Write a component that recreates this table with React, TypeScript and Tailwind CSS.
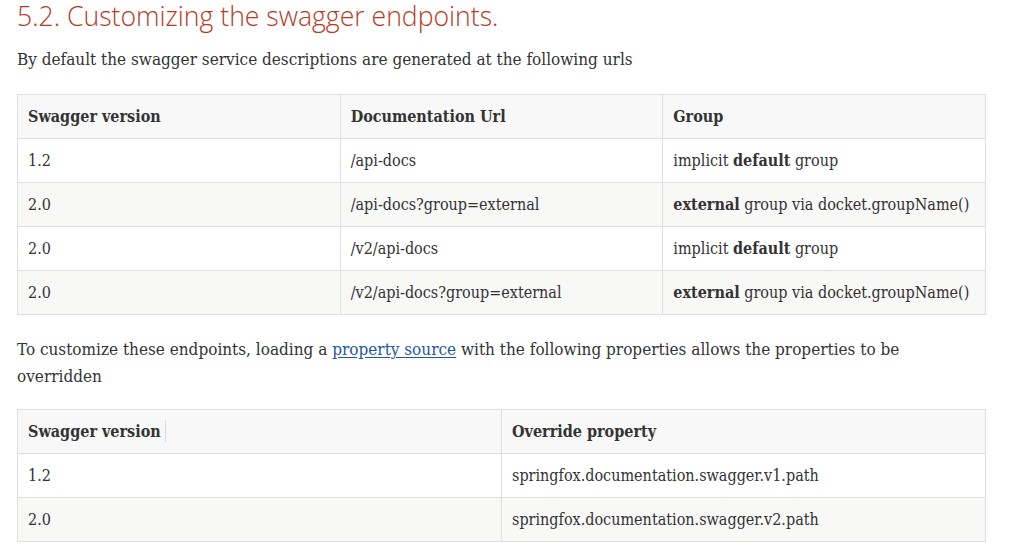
const serif = "font-['DejaVu_Serif_Condensed','DejaVu_Serif',serif]";

const endpoints = [
  { version: "1.2", url: "/api-docs", group: <>implicit <b>default</b> group</> },
  { version: "2.0", url: "/api-docs?group=external", group: <><b>external</b> group via docket.groupName()</> },
  { version: "2.0", url: "/v2/api-docs", group: <>implicit <b>default</b> group</> },
  { version: "2.0", url: "/v2/api-docs?group=external", group: <><b>external</b> group via docket.groupName()</> },
];

const overrides = [
  { version: "1.2", prop: "springfox.documentation.swagger.v1.path" },
  { version: "2.0", prop: "springfox.documentation.swagger.v2.path" },
];

const th = "border border-[#dedede] px-[10px] h-[44px] text-left font-bold text-[#333333] align-middle";
const td = "border border-[#dedede] px-[10px] h-[44px] text-left font-normal text-[#333333] align-middle";

export default function App() {
  return (
    <div className={`bg-white w-[1017px] h-[555px] overflow-hidden px-[17px] ${serif}`}>
      <div className="w-[969px]">
        <h3 className="font-['Open_Sans',sans-serif] font-light text-[26.6px] leading-[33px] text-[#ba3925] mb-[13px]">
          5.2. Customizing the swagger endpoints.
        </h3>
        <p className="text-[17px] leading-[27.2px] text-[#333333] mb-[21px]">
          By default the swagger service descriptions are generated at the following urls
        </p>

        <table className="w-full border-collapse table-fixed text-[16px] leading-[25px]">
          <thead>
            <tr className="bg-[#f7f8f7]">
              <th className={th}>Swagger version</th>
              <th className={th}>Documentation Url</th>
              <th className={th}>Group</th>
            </tr>
          </thead>
          <tbody>
            {endpoints.map((row, i) => (
              <tr key={i} className={i % 2 === 1 ? "bg-[#f8f8f7]" : "bg-white"}>
                <td className={td}>{row.version}</td>
                <td className={td}>{row.url}</td>
                <td className={td}>{row.group}</td>
              </tr>
            ))}
          </tbody>
        </table>

        <p className="text-[17px] leading-[27.2px] text-[#333333] mt-[21px] mb-[18px]">
          To customize these endpoints, loading a{" "}
          <a href="#" className="text-[#2156a5] underline underline-offset-2">
            property source
          </a>{" "}
          with the following properties allows the properties to be overridden
        </p>

        <table className="w-full border-collapse table-fixed text-[16px] leading-[25px]">
          <thead>
            <tr className="bg-[#f7f8f7]">
              <th className={th}>
                <span className="inline-flex items-center">
                  Swagger version
                  <span className="ml-[4px] w-px h-[22px] bg-[#d6dce6]" />
                </span>
              </th>
              <th className={th}>Override property</th>
            </tr>
          </thead>
          <tbody>
            {overrides.map((row, i) => (
              <tr key={i} className={i % 2 === 1 ? "bg-[#f8f8f7]" : "bg-white"}>
                <td className={td}>{row.version}</td>
                <td className={td}>{row.prop}</td>
              </tr>
            ))}
          </tbody>
        </table>
      </div>
    </div>
  );
}
